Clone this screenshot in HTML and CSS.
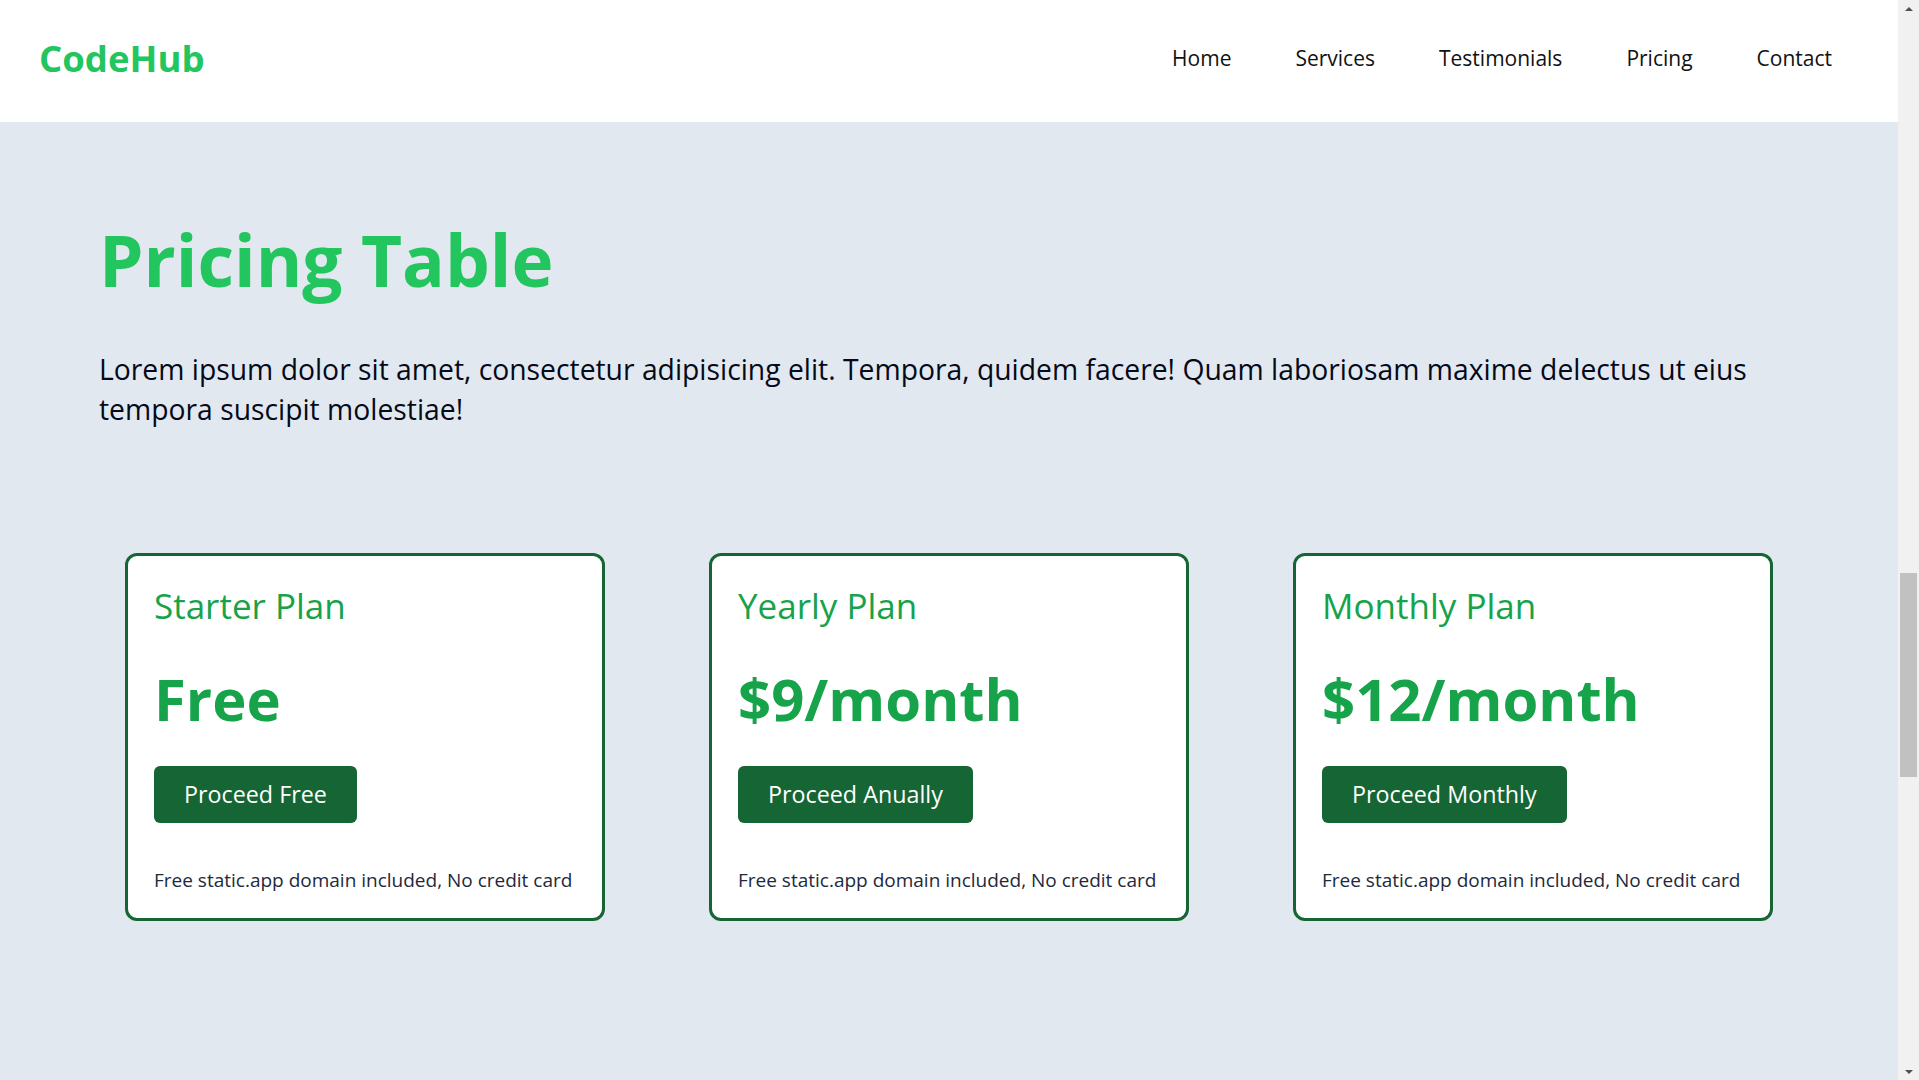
FILE: index.html
```html
<!DOCTYPE html>
<html lang="en">
<head>
<meta charset="utf-8">
<title>CodeHub – Pricing</title>
<link rel="stylesheet" href="styles.css">
</head>
<body>
<header class="site-header">
  <a class="logo" href="#">CodeHub</a>
  <nav>
    <ul class="nav-list">
      <li><a href="#">Home</a></li>
      <li><a href="#">Services</a></li>
      <li><a href="#">Testimonials</a></li>
      <li><a href="#">Pricing</a></li>
      <li><a href="#">Contact</a></li>
    </ul>
  </nav>
</header>
<main class="pricing">
  <h1 class="pricing-title">Pricing Table</h1>
  <p class="pricing-intro">Lorem ipsum dolor sit amet, consectetur adipisicing elit. Tempora, quidem facere! Quam laboriosam maxime delectus ut eius tempora suscipit molestiae!</p>
  <div class="cards">
    <div class="card">
      <h2 class="plan-name">Starter Plan</h2>
      <div class="plan-price">Free</div>
      <button class="plan-btn">Proceed Free</button>
      <p class="plan-note">Free static.app domain included, No credit card</p>
    </div>
    <div class="card">
      <h2 class="plan-name">Yearly Plan</h2>
      <div class="plan-price">$9/month</div>
      <button class="plan-btn">Proceed Anually</button>
      <p class="plan-note">Free static.app domain included, No credit card</p>
    </div>
    <div class="card">
      <h2 class="plan-name">Monthly Plan</h2>
      <div class="plan-price">$12/month</div>
      <button class="plan-btn">Proceed Monthly</button>
      <p class="plan-note">Free static.app domain included, No credit card</p>
    </div>
  </div>
</main>
<div class="scrollbar" aria-hidden="true">
  <div class="sb-btn sb-up"></div>
  <div class="sb-track"><div class="sb-thumb"></div></div>
  <div class="sb-btn sb-down"></div>
</div>
</body>
</html>
```
FILE: styles.css
```css
* {
  box-sizing: border-box;
}
html {
  background: #e2e8f0;
}
body {
  margin: 0 21px 0 0;
  min-height: 100vh;
  background: #e2e8f0;
  font-family: "Segoe UI", "Open Sans", "Noto Sans", sans-serif;
  color: #0f172a;
}
.site-header {
  height: 122px;
  background: #ffffff;
  display: flex;
  align-items: center;
  justify-content: space-between;
  padding: 0 66px 6px 39px;
}
.logo {
  font-size: 36.5px;
  font-weight: 700;
  color: #22c55e;
  text-decoration: none;
  line-height: 48px;
}
.nav-list {
  list-style: none;
  margin: 0;
  padding: 0;
  display: flex;
  gap: 64px;
}
.nav-list a {
  font-size: 21px;
  color: #111111;
  text-decoration: none;
  line-height: 28px;
}
.pricing {
  padding: 88px 99px 0;
}
.pricing-title {
  margin: 0;
  font-size: 71px;
  line-height: 100px;
  font-weight: 700;
  color: #22c55e;
}
.pricing-intro {
  margin: 39px 0 0;
  font-size: 28.3px;
  line-height: 40px;
  color: #050a18;
}
.cards {
  display: flex;
  justify-content: center;
  gap: 104px;
  margin-top: 124px;
}
.card {
  width: 480px;
  background: #ffffff;
  border: 3px solid #166534;
  border-radius: 12px;
  padding: 26px 24px 26px 26px;
}
.plan-name {
  margin: 0;
  font-size: 35px;
  line-height: 48px;
  font-weight: 400;
  color: #16a34a;
}
.plan-price {
  margin-top: 29px;
  font-size: 58px;
  line-height: 80px;
  font-weight: 700;
  color: #16a34a;
}
.plan-btn {
  display: inline-block;
  margin-top: 27px;
  padding: 12px 30px;
  border: none;
  border-radius: 6px;
  background: #166534;
  color: #ffffff;
  font-family: inherit;
  font-size: 23.3px;
  line-height: 33px;
  cursor: pointer;
}
.plan-note {
  margin: 45px 0 0;
  font-size: 19px;
  line-height: 24px;
  color: #1e293b;
}

/* decorative window scrollbar overlay */
.scrollbar {
  position: fixed;
  top: 0;
  right: 0;
  width: 21px;
  height: 100vh;
  background: #f1f1f1;
  display: flex;
  flex-direction: column;
}
.sb-btn {
  height: 17px;
  display: flex;
  justify-content: center;
  align-items: center;
}
.sb-up::before,
.sb-down::before {
  content: "";
  width: 0;
  height: 0;
  border-left: 4px solid transparent;
  border-right: 4px solid transparent;
}
.sb-up::before {
  border-bottom: 4px solid #505050;
}
.sb-down::before {
  border-top: 4px solid #505050;
}
.sb-track {
  flex: 1;
  padding: 556px 2px 0 2px;
}
.sb-thumb {
  height: 204px;
  background: #c1c1c1;
}
```
